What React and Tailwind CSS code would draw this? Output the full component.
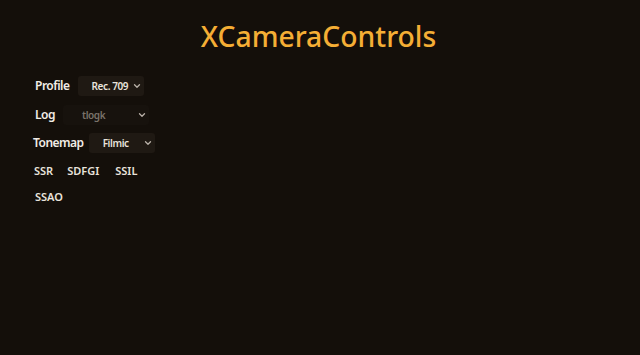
import React from "react";

function Chevron() {
  return (
    <svg width="8" height="6" viewBox="0 0 8 6" className="shrink-0">
      <path d="M1.5 1.8 L4 4.2 L6.5 1.8" fill="none" stroke="#b9b1a8" strokeWidth="1.3" strokeLinecap="round" strokeLinejoin="round" />
    </svg>
  );
}

function Dropdown({ value, width, padL, disabled }) {
  return (
    <div
      className={`flex items-center justify-between h-[20px] rounded-[3px] pr-[3px] shrink-0 ${disabled ? "bg-[#17120d]" : "bg-[#1f1913]"} ${width} ${padL}`}
    >
      <span className={`text-[10px] font-semibold tracking-[-0.4px] leading-none whitespace-nowrap ${disabled ? "text-[#7a726a]" : "text-[#e9e3dc]"}`}>{value}</span>
      <Chevron />
    </div>
  );
}

export default function App() {
  return (
    <div className="w-[640px] h-[355px] bg-[#140f0a] overflow-hidden" style={{ fontFamily: '"Noto Sans", sans-serif' }}>
      <div className="pt-[16px] flex justify-center">
        <h1 className="text-[28.3px] leading-[40px] font-medium text-[#f5ae35] pr-[3px]">XCameraControls</h1>
      </div>
      <div className="mt-[20px] flex flex-col text-[#f1ece6]">
        <div className="flex items-center h-[20px] pl-[35px] gap-[8px]">
          <span className="text-[12px] font-semibold tracking-[-0.5px] leading-none whitespace-nowrap">Profile</span>
          <Dropdown value="Rec. 709" width="w-[66px]" padL="pl-[14px]" />
        </div>
        <div className="flex items-center h-[21px] mt-[8px] pl-[35px] gap-[8px]">
          <span className="text-[12px] font-semibold tracking-[-0.5px] leading-none whitespace-nowrap">Log</span>
          <Dropdown value="tlogk" width="w-[86px]" padL="pl-[19px]" disabled />
        </div>
        <div className="flex items-center h-[20px] mt-[8px] pl-[33px] gap-[5px]">
          <span className="text-[12px] font-semibold tracking-[-0.5px] leading-none whitespace-nowrap">Tonemap</span>
          <Dropdown value="Filmic" width="w-[66px]" padL="pl-[14px]" />
        </div>
        <div className="flex items-center h-[20px] mt-[7px] pl-[34px] text-[11px] font-semibold leading-none text-[#e9e3dc]">
          <span>SSR</span>
          <span className="ml-[14px]">SDFGI</span>
          <span className="ml-[16px]">SSIL</span>
        </div>
        <div className="flex items-center h-[20px] mt-[6px] pl-[35px] text-[11px] font-semibold leading-none text-[#e9e3dc]">
          <span>SSAO</span>
        </div>
      </div>
    </div>
  );
}
